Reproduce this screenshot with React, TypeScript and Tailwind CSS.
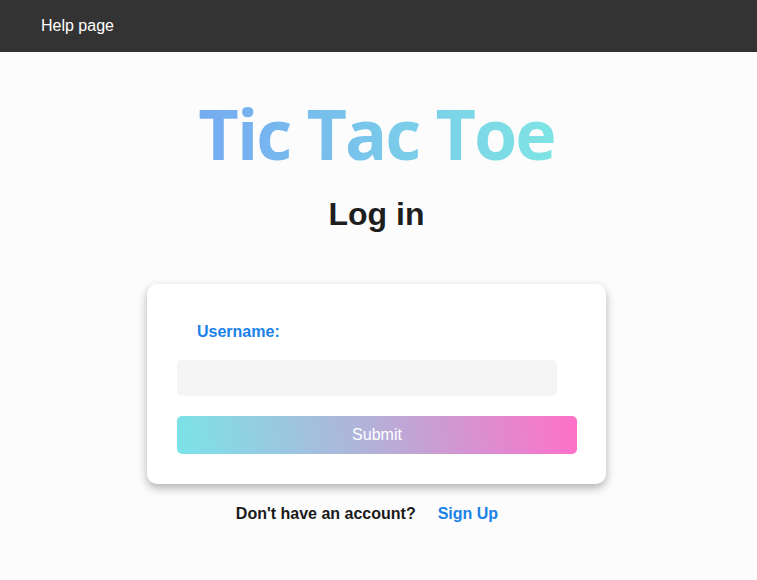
export default function App() {
  return (
    <div className="min-h-screen bg-[#fcfcfc] font-['Liberation_Sans',Arial,sans-serif]">
      {/* Navbar */}
      <nav className="h-[52px] bg-[#333333] flex items-center px-[41px]">
        <a className="text-white text-[16px]">Help page</a>
      </nav>

      <main className="flex flex-col items-center pr-[4px]">
        <h1 className="mt-[36px] h-[90px] flex items-center text-[70px] tracking-[-2px] font-bold leading-none bg-[linear-gradient(80deg,#74a9f2,#7fe6e3)] bg-clip-text text-transparent font-['Open_Sans',sans-serif]">
          Tic Tac Toe
        </h1>
        <h2 className="mt-[20px] text-[32px] font-bold text-[#1e1e1e] leading-none">Log in</h2>

        {/* Card */}
        <div className="mt-[54px] w-[459px] h-[200px] bg-white rounded-[10px] shadow-[0_4px_10px_rgba(0,0,0,0.3)] pt-[38px] px-[30px]">
          <label className="block pl-[20px] text-[16px] font-bold text-[#1a82e8] leading-[20px]">Username:</label>
          <input className="mt-[18px] block w-[380px] h-[36px] bg-[#f5f5f5] rounded-[5px] outline-none px-3" />
          <button className="mt-[20px] w-[400px] h-[38px] rounded-[5px] bg-[linear-gradient(80deg,#7be3e8,#b5afd8,#ff70c8)] text-white text-[16px]">
            Submit
          </button>
        </div>

        <div className="mt-[18px] mr-[19px] flex gap-[22px] text-[16px] font-bold">
          <span className="text-[#1a1a1a]">Don't have an account?</span>
          <a className="text-[#1a82e8]">Sign Up</a>
        </div>
      </main>
    </div>
  );
}
